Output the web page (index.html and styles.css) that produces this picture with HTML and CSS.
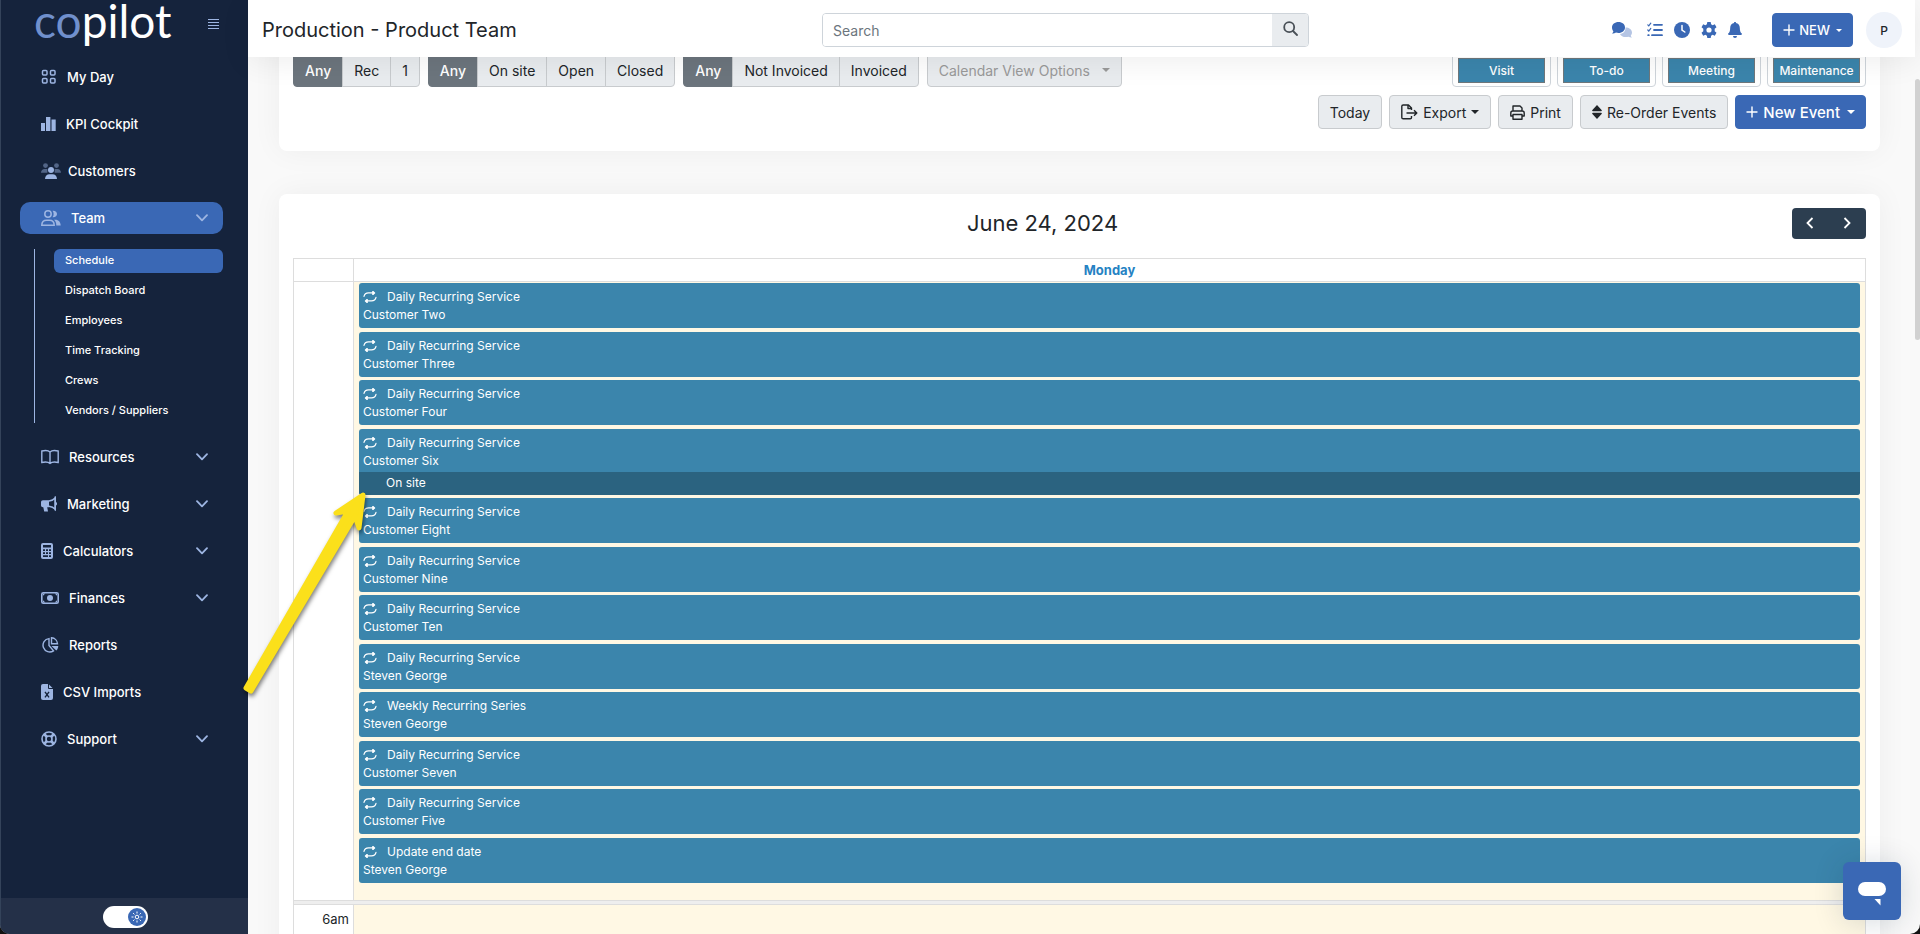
FILE: index.html
```html
<!DOCTYPE html>
<html lang="en">

<head>
	<meta charset="utf-8">
	<title>Production - Product Team</title>
	<link rel="stylesheet" href="styles.css">
</head>

<body>
	<!-- Shared icons -->
	<svg class="sprite" aria-hidden="true">
		<symbol id="chevron" viewBox="0 0 12 8"><path d="M1 1.2 6 6.4 11 1.2" fill="none" stroke="currentColor" stroke-width="1.8" stroke-linecap="round" stroke-linejoin="round"/></symbol>
		<symbol id="repeat" viewBox="0 0 14 14"><path d="M1 6.400C1.500 4 3.300 2.900 5.500 2.900H11M13 7.400c-.5 2.400-2.300 3.500-4.500 3.500H3" fill="none" stroke="currentColor" stroke-width="1.200" stroke-linecap="round"/><path d="M9.200.9h1.200l2 2-2 2H9.200zM4.800 8.900H3.600l-2 2 2 2h1.200z" fill="currentColor"/></symbol>
		<symbol id="plus" viewBox="0 0 12 12"><path d="M6 1v10M1 6h10" stroke="currentColor" stroke-width="1.4" stroke-linecap="round"/></symbol>
	</svg>

	<div class="app">
		<aside class="sidebar">
			<div class="brand">
				<a href="#" class="logo"><span>co</span>pilot</a>
				<button class="menu-btn" aria-label="Toggle menu">
					<svg width="12" height="12" viewBox="0 0 12 12"><path d="M0 1.5h11M0 4.5h11M0 7.500h11M0 10.500h11" stroke="currentColor" stroke-width="1.2"/></svg>
				</button>
			</div>

			<nav class="nav">
				<a href="#" class="nav-item">
					<svg width="16" height="16" viewBox="0 0 16 16" fill="none" stroke="currentColor" stroke-width="1.5"><rect x="1.500" y="1.500" width="4.500" height="4.500" rx="1"/><rect x="9.500" y="1.500" width="4.500" height="4.500" rx="1"/><rect x="1.500" y="9.500" width="4.500" height="4.500" rx="1"/><rect x="9.500" y="9.500" width="4.500" height="4.500" rx="1"/></svg>
					<span>My Day</span>
				</a>
				<a href="#" class="nav-item">
					<svg width="15" height="16" viewBox="0 0 15 16" fill="currentColor"><path d="M0 7h4v8H0zM5 1h4.400v14H5zM10.500 3.500h4.200V15h-4.200z"/></svg>
					<span>KPI Cockpit</span>
				</a>
				<a href="#" class="nav-item wide">
					<svg width="20" height="16" viewBox="0 0 20 16" fill="currentColor"><g opacity=".45"><circle cx="4.500" cy="2.600" r="2.400"/><circle cx="15.500" cy="2.600" r="2.400"/><path d="M0 9.800C0 7.600 1.600 6 3.600 6h2.800v3.800zM20 9.800C20 7.600 18.400 6 16.400 6h-2.800v3.800z"/></g><circle cx="10" cy="7" r="3"/><path d="M4 16c0-3 2-4.800 4.400-4.800h3.200C14 11.200 16 13 16 16z"/></svg>
					<span>Customers</span>
				</a>
				<a href="#" class="nav-item wide active">
					<svg width="20" height="16" viewBox="0 0 20 16" fill="none" stroke="currentColor" stroke-width="1.500"><circle cx="7" cy="4" r="3.200"/><path d="M.8 15.200c0-3.200 2.200-5 4.800-5h2.800c2.600 0 4.800 1.800 4.800 5z"/><path d="M11.500.8c2.700-.4 4.500 1.200 4.500 3.200s-1.800 3.600-4.500 3.200c1.500-1.800 1.500-4.600 0-6.400zM13 9.800h1.500c3 0 5.200 2.400 5.200 5.600h-4.400c0-2.600-.8-4.300-2.300-5.600z" fill="currentColor" stroke="none"/></svg>
					<span>Team</span>
					<svg class="chev"><use href="#chevron"/></svg>
				</a>
				<div class="subnav">
					<a href="#" class="current">Schedule</a>
					<a href="#">Dispatch Board</a>
					<a href="#">Employees</a>
					<a href="#">Time Tracking</a>
					<a href="#">Crews</a>
					<a href="#">Vendors / Suppliers</a>
				</div>
				<a href="#" class="nav-item">
					<svg width="18" height="16" viewBox="0 0 18 16" fill="none" stroke="currentColor" stroke-width="1.400"><path d="M9 3C7.500 1.500 4 1.300.8 2v11.500c3.200-.7 6.700-.4 8.200.9 1.500-1.300 5-1.600 8.200-.9V2C14 1.300 10.500 1.500 9 3zv11"/></svg>
					<span>Resources</span>
					<svg class="chev"><use href="#chevron"/></svg>
				</a>
				<a href="#" class="nav-item">
					<svg width="16" height="16" viewBox="0 0 16 16" fill="currentColor"><path d="M0 6.200C0 5 .8 4.200 2 4.200h6v7H6.200l.8 4.200H3.200l-.9-4.200H2c-1.200 0-2-.8-2-2z"/><path d="M8 5c2.500-.3 4.800-1.400 6.200-3v11.200C12.800 11.600 10.500 10.500 8 10.200" fill="none" stroke="currentColor" stroke-width="1.500"/><path d="M13.500.5h1.500v14h-1.500z"/><path d="M15 6c1.400.4 1.400 3 0 3.400z"/></svg>
					<span>Marketing</span>
					<svg class="chev"><use href="#chevron"/></svg>
				</a>
				<a href="#" class="nav-item">
					<svg width="12" height="16" viewBox="0 0 12 16"><rect width="12" height="16" rx="2" fill="currentColor"/><path d="M2 2h8v2.500H2zM2 6.200h2v1.800H2zm3 0h2v1.800H5zm3 0h2v1.800H8zM2 9.200h2V11H2zm3 0h2V11H5zm3 0h2V11H8zM2 12.200h5V14H2zm6 0h2V14H8z" fill="#15233c"/></svg>
					<span>Calculators</span>
					<svg class="chev"><use href="#chevron"/></svg>
				</a>
				<a href="#" class="nav-item">
					<svg width="18" height="16" viewBox="0 0 18 16"><rect x=".8" y="2.800" width="16.400" height="10.400" rx="1.500" fill="none" stroke="currentColor" stroke-width="1.600"/><circle cx="9" cy="8" r="3" fill="currentColor"/><path d="M2 5.800 4.300 3.500H2zM16 5.800l-2.300-2.300H16zM2 10.200l2.300 2.300H2zM16 10.200l-2.300 2.300H16z" fill="currentColor"/></svg>
					<span>Finances</span>
					<svg class="chev"><use href="#chevron"/></svg>
				</a>
				<a href="#" class="nav-item">
					<svg width="18" height="16" viewBox="0 0 18 16" fill="none" stroke="currentColor" stroke-width="1.400"><path d="M8 1.600A6.700 6.700 0 1 0 12.500 13.800L8 8.500z"/><path d="M10.500.8v6h6C16.300 3.500 13.800 1 10.500.8z"/><path d="M10.500 9h6.800c-.1 1.900-.8 3.400-2 4.600z" fill="currentColor" stroke="none"/></svg>
					<span>Reports</span>
				</a>
				<a href="#" class="nav-item">
					<svg width="12" height="16" viewBox="0 0 12 16"><path d="M2 0h5.500L12 4.500V14a2 2 0 0 1-2 2H2a2 2 0 0 1-2-2V2a2 2 0 0 1 2-2z" fill="currentColor"/><path d="M7.500 0v4.500H12" fill="none" stroke="#15233c"/><path d="m4 7.800 4 5.500M8 7.800l-4 5.500" stroke="#15233c" stroke-width="1.400"/></svg>
					<span>CSV Imports</span>
				</a>
				<a href="#" class="nav-item">
					<svg width="16" height="16" viewBox="0 0 16 16" fill="none" stroke="currentColor" stroke-width="1.600"><circle cx="8" cy="8" r="7"/><circle cx="8" cy="8" r="3"/><path d="m3 3 3 3M13 3l-3 3M3 13l3-3M13 13l-3-3" stroke-width="2.600"/></svg>
					<span>Support</span>
					<svg class="chev"><use href="#chevron"/></svg>
				</a>
			</nav>

			<div class="side-foot">
				<label class="switch">
					<input type="checkbox" checked aria-label="Light mode">
					<span class="knob"><svg width="12" height="12" viewBox="0 0 12 12" fill="none" stroke="#fff"><circle cx="6" cy="6" r="1.800"/><path d="M6 .5v2M6 9.500v2M.5 6h2M9.500 6h2M2.100 2.100l1.300 1.300M8.600 8.600l1.300 1.300M9.900 2.100 8.600 3.400M3.400 8.600 2.100 9.900"/></svg></span>
				</label>
			</div>
		</aside>

		<div class="main">
			<header class="topbar">
				<h1>Production - Product Team</h1>
				<form class="search">
					<input type="text" placeholder="Search" aria-label="Search">
					<button type="button" aria-label="Search">
						<svg width="15" height="15" viewBox="0 0 15 15" fill="none" stroke="currentColor" stroke-width="1.800" stroke-linecap="round"><circle cx="6.200" cy="6.200" r="5"/><path d="m10 10 4 4"/></svg>
					</button>
				</form>
				<div class="top-right">
					<div class="top-icons">
						<button class="ico-chat" aria-label="Messages"><svg width="20" height="16" viewBox="0 0 20 16"><path d="M13.500 5.500c3.500 0 6.500 2 6.500 5 0 1.200-.5 2.200-1.200 3 .1.900.6 1.500 1.200 2-1.500.1-2.700-.3-3.500-.8-3.500 1.100-7.500 0-8.500-2.700 3.500-.5 5.700-3 5.500-6.500z" fill="#b5c5e4"/><path d="M6.500 0C10.200 0 13 2.300 13 5.400s-2.800 5.500-6.500 5.500c-.9 0-1.800-.2-2.600-.5-.9.700-2.200 1.200-3.900 1.200.7-.6 1.200-1.400 1.400-2.400C.5 8.200 0 6.900 0 5.400 0 2.300 2.800 0 6.500 0z" fill="#3a68b5"/></svg></button>
						<button aria-label="Tasks"><svg width="16" height="16" viewBox="0 0 16 16" fill="none" stroke="currentColor" stroke-width="1.800" stroke-linecap="round"><path d="M7 2.800h8M7 8h8M5 13.200h10M1.200 13.200h.6"/><path d="m.8 2.800 1 1 2-2.600M.8 8l1 1 2-2.600" stroke-width="1.200"/></svg></button>
						<button aria-label="Time clock"><svg width="16" height="16" viewBox="0 0 16 16"><circle cx="8" cy="8" r="8" fill="currentColor"/><path d="M8 3.500V8l2.800 2" fill="none" stroke="#fff" stroke-width="1.500" stroke-linecap="round"/></svg></button>
						<button aria-label="Settings"><svg width="16" height="16" viewBox="0 0 16 16"><path d="M6.300 0h3.400l.4 2.300 1.500.9 2.200-.9 1.700 3-1.800 1.500v2.400l1.800 1.500-1.700 3-2.200-.9-1.500.9L9.700 16H6.300l-.4-2.300-1.500-.9-2.200.9-1.700-3 1.800-1.500V6.800L.5 5.300l1.700-3 2.200.9 1.500-.9zM8 5.400a2.600 2.600 0 1 0 0 5.200 2.600 2.600 0 0 0 0-5.200z" fill="currentColor" fill-rule="evenodd"/></svg></button>
						<button aria-label="Notifications"><svg width="14" height="16" viewBox="0 0 14 16" fill="currentColor"><path d="M6.100 0h1.800v1.100c2.300.4 3.900 2.300 3.900 4.700 0 3.200.7 4.700 2 5.800.4.500.1 1.400-.7 1.400H.9c-.8 0-1.100-.9-.7-1.400 1.300-1.100 2-2.600 2-5.800 0-2.400 1.600-4.300 3.900-4.700zM5 14h4a2 2 0 0 1-4 0z"/></svg></button>
					</div>
					<button class="btn btn-primary btn-new"><svg class="plus"><use href="#plus"/></svg>NEW <i class="caret"></i></button>
					<button class="avatar">P</button>
				</div>
			</header>

			<div class="content">
				<section class="card filters">
					<div class="filter-row">
						<div class="btn-group">
							<button class="btn on">Any</button><button class="btn">Rec</button><button class="btn">1</button>
						</div>
						<div class="btn-group">
							<button class="btn on">Any</button><button class="btn">On site</button><button class="btn">Open</button><button class="btn">Closed</button>
						</div>
						<div class="btn-group">
							<button class="btn on">Any</button><button class="btn">Not Invoiced</button><button class="btn">Invoiced</button>
						</div>
						<button class="btn btn-view" disabled>Calendar View Options <i class="caret"></i></button>
						<div class="types">
							<button class="type"><span>Visit</span></button>
							<button class="type"><span>To-do</span></button>
							<button class="type"><span>Meeting</span></button>
							<button class="type"><span>Maintenance</span></button>
						</div>
					</div>
					<div class="action-row">
						<button class="btn">Today</button>
						<button class="btn"><svg width="17" height="16" viewBox="0 0 17 16" fill="none" stroke="currentColor" stroke-width="1.400" stroke-linejoin="round"><path d="M10.500 6V4L7.500 1H2.200C1.300 1 .8 1.500.8 2.300v11.200c0 .8.500 1.300 1.400 1.300h7c.8 0 1.300-.5 1.300-1.300V12M7 1v3.500h3.500M5.500 9h10M13 6.200 15.800 9 13 11.800"/></svg>Export<i class="caret"></i></button>
						<button class="btn"><svg width="15" height="15" viewBox="0 0 15 15" fill="none" stroke="currentColor" stroke-width="1.400" stroke-linejoin="round"><path d="M3 6V1h7l2 2v3M3 11H.8V8c0-1.200.8-2 2-2h9.400c1.200 0 2 .8 2 2v3H12M3 9.500h9v4.800H3z"/></svg>Print</button>
						<button class="btn"><svg width="10" height="14" viewBox="0 0 10 14" fill="currentColor"><path d="M5 0l4.600 5c.5.600.2 1.200-.5 1.200H.9C.2 6.200-.1 5.600.4 5zM5 14l4.600-5c.5-.6.2-1.200-.5-1.200H.9c-.7 0-1 .6-.5 1.200z"/></svg>Re-Order Events</button>
						<button class="btn btn-primary btn-event"><svg class="plus"><use href="#plus"/></svg>New Event <i class="caret"></i></button>
					</div>
				</section>

				<section class="card calendar">
					<div class="cal-head">
						<span></span>
						<h2>June 24, 2024</h2>
						<div class="pager">
							<button aria-label="Previous day"><svg width="8" height="12" viewBox="0 0 8 12"><path d="M6.500 1 1.500 6l5 5"/></svg></button>
							<button aria-label="Next day"><svg width="8" height="12" viewBox="0 0 8 12"><path d="m1.500 1 5 5-5 5"/></svg></button>
						</div>
					</div>

					<table class="cal-grid">
						<thead>
							<tr>
								<th class="axis"></th>
								<th><a href="#">Monday</a></th>
							</tr>
						</thead>
						<tbody>
							<tr class="all-day">
								<td class="axis"></td>
								<td class="day">
									<div class="event"><p><svg><use href="#repeat"/></svg>Daily Recurring Service</p><p>Customer Two</p></div>
									<div class="event"><p><svg><use href="#repeat"/></svg>Daily Recurring Service</p><p>Customer Three</p></div>
									<div class="event"><p><svg><use href="#repeat"/></svg>Daily Recurring Service</p><p>Customer Four</p></div>
									<div class="event"><p><svg><use href="#repeat"/></svg>Daily Recurring Service</p><p>Customer Six</p><div class="status">On site</div></div>
									<div class="event"><p><svg><use href="#repeat"/></svg>Daily Recurring Service</p><p>Customer Eight</p></div>
									<div class="event"><p><svg><use href="#repeat"/></svg>Daily Recurring Service</p><p>Customer Nine</p></div>
									<div class="event"><p><svg><use href="#repeat"/></svg>Daily Recurring Service</p><p>Customer Ten</p></div>
									<div class="event"><p><svg><use href="#repeat"/></svg>Daily Recurring Service</p><p>Steven George</p></div>
									<div class="event"><p><svg><use href="#repeat"/></svg>Weekly Recurring Series</p><p>Steven George</p></div>
									<div class="event"><p><svg><use href="#repeat"/></svg>Daily Recurring Service</p><p>Customer Seven</p></div>
									<div class="event"><p><svg><use href="#repeat"/></svg>Daily Recurring Service</p><p>Customer Five</p></div>
									<div class="event"><p><svg><use href="#repeat"/></svg>Update end date</p><p>Steven George</p></div>
								</td>
							</tr>
							<tr class="divider"><td colspan="2"></td></tr>
							<tr class="slot">
								<td class="axis">6am</td>
								<td class="day"></td>
							</tr>
						</tbody>
					</table>
				</section>
			</div>
		</div>

		<div class="scroll"><div class="thumb"></div></div>

		<button class="chat" aria-label="Open chat">
			<svg width="30" height="26" viewBox="0 0 30 26" fill="#fff"><rect x="1" y="1" width="28" height="14" rx="7"/><path d="M17.500 18H23.500v6.500z"/></svg>
		</button>

		<!-- Pointer to the On site bar -->
		<svg class="arrow" width="150" height="220" viewBox="0 0 150 220">
			<path d="M126 13 99 31 111 29 9 206 14 209 118 34 122 46z" fill="#fbe01b" stroke="#fbe01b" stroke-width="5" stroke-linejoin="round"/>
		</svg>
	</div>
</body>

</html>
```

FILE: styles.css
```css
* {
	box-sizing: border-box;
}

html {
	background: #111;
}

body {
	margin: 0;
	font-family: Inter, "Liberation Sans", sans-serif;
	font-size: 14px;
	color: #212529;
}

button,
input {
	font: inherit;
	color: inherit;
}

button {
	padding: 0;
	border: 0;
	background: none;
}

a {
	color: inherit;
	text-decoration: none;
}

h1,
h2,
p {
	margin: 0;
	font-weight: 400;
}

.sprite {
	position: absolute;
	width: 0;
	height: 0;
}

.app {
	position: relative;
	display: flex;
	height: 100vh;
	overflow: hidden;
	background: #f9f9f9;
	border-radius: 0 0 10px 10px;
}

/* sidebar */
.sidebar {
	display: flex;
	flex-direction: column;
	width: 248px;
	flex: none;
	background: #15233c;
	border-left: 1px solid #34435a;
	color: #fff;
}

.brand {
	display: flex;
	align-items: flex-start;
	justify-content: space-between;
	height: 48px;
	padding: 0 28px 0 33px;
}

.logo {
	font-family: Lato, sans-serif;
	font-size: 46px;
	line-height: 42px;
}

.logo span {
	color: #7090cd;
}

.menu-btn {
	margin-top: 18px;
	color: #9db5e2;
}

.menu-btn svg {
	display: block;
}

.nav {
	flex: 1;
	padding: 13px 25px 0 19px;
}

.nav-item {
	display: flex;
	align-items: center;
	gap: 10px;
	height: 32px;
	margin-bottom: 15px;
	padding: 0 15px 0 21px;
	border-radius: 10px;
	font-size: 13px;
	font-weight: 500;
}

.nav-item svg {
	flex: none;
	color: #9db5e2;
}

.nav-item .chev {
	width: 12px;
	height: 8px;
	margin-left: auto;
}

.nav-item.wide {
	gap: 7px;
}

.nav-item.active {
	gap: 10px;
	background: #3a68b5;
}

.subnav {
	margin: 0 0 18px 14px;
	padding-left: 19px;
	border-left: 1px solid #9db5e2;
}

.subnav a {
	display: block;
	height: 24px;
	margin-bottom: 6px;
	padding-left: 11px;
	border-radius: 6px;
	font-size: 11px;
	font-weight: 500;
	line-height: 22px;
}

.subnav a:last-child {
	margin-bottom: 0;
}

.subnav .current {
	background: #3a68b5;
}

.side-foot {
	display: flex;
	align-items: center;
	justify-content: center;
	height: 36px;
	padding: 1px 0 0 2px;
	background: #243048;
}

.switch {
	display: flex;
	align-items: center;
	justify-content: flex-end;
	width: 45px;
	height: 22px;
	padding: 2px;
	border-radius: 11px;
	background: #fff;
}

.switch input {
	position: absolute;
	opacity: 0;
}

.knob {
	display: flex;
	align-items: center;
	justify-content: center;
	width: 18px;
	height: 18px;
	border-radius: 50%;
	background: #3a68b5;
}

/* top bar */
.main {
	display: flex;
	flex-direction: column;
	flex: 1;
	min-width: 0;
}

.topbar {
	position: relative;
	z-index: 1;
	display: grid;
	grid-template-columns: 17fr 487px 18fr;
	align-items: center;
	flex: none;
	height: 57px;
	padding: 3px 13px 0 14px;
	background: #fff;
	box-shadow: 0 5px 30px rgba(0, 0, 0, 0.07);
}

.topbar h1 {
	font-size: 20px;
	line-height: 24px;
}

.search {
	display: flex;
	height: 34px;
	border: 1px solid #ced4da;
	border-radius: 4px;
	overflow: hidden;
}

.search input {
	flex: 1;
	min-width: 0;
	padding: 0 10px;
	border: 0;
	background: #fff;
}

.search input::placeholder {
	color: #6c757d;
	opacity: 1;
}

.search button {
	width: 36px;
	background: #e9ecef;
	color: #495057;
}

.top-right {
	display: flex;
	align-items: center;
	justify-content: flex-end;
}

.top-icons {
	display: flex;
	align-items: center;
	gap: 11px;
	margin-right: 30px;
	color: #3a68b5;
}

.top-icons svg {
	display: block;
}

.ico-chat {
	margin-right: 4px;
}

.avatar {
	width: 36px;
	height: 36px;
	margin-left: 13px;
	border-radius: 50%;
	background: #eff3fa;
	font-size: 12px;
	font-weight: 500;
}

/* buttons */
.btn {
	display: inline-flex;
	align-items: center;
	gap: 5px;
	height: 34px;
	padding: 0 11px;
	border: 1px solid #c8cbce;
	border-radius: 4px;
	background: #e9ecef;
	white-space: nowrap;
}

.btn-primary {
	padding: 0 10px;
	border-color: #3a68b5;
	background: #3a68b5;
	color: #fff;
	font-weight: 500;
}

.btn-new {
	gap: 4px;
	font-size: 13px;
}

.btn-event {
	font-size: 15px;
}

.plus {
	width: 12px;
	height: 12px;
}

.caret {
	border: 4px solid transparent;
	border-top-color: currentColor;
	border-bottom: 0;
}

.btn-primary .caret {
	margin-left: 2px;
}

.btn-new .caret {
	border-width: 3px 3px 0;
}

.btn-group {
	display: flex;
}

.btn-group .btn {
	margin-left: -1px;
	border-radius: 0;
}

.btn-group .btn:first-child {
	margin-left: 0;
	border-radius: 4px 0 0 4px;
}

.btn-group .btn:last-child {
	border-radius: 0 4px 4px 0;
}

.btn-group .on {
	border-color: #6c757d;
	background: #6c757d;
	color: #fff;
	font-weight: 500;
}

.btn-view {
	gap: 12px;
	color: #999;
}

/* content */
.content {
	flex: 1;
	min-height: 0;
	padding: 0 35px 0 31px;
	overflow: hidden;
}

.card {
	padding: 14px;
	border-radius: 8px;
	background: #fff;
	box-shadow: 0 0 30px rgba(0, 0, 0, 0.05);
}

/* scrolled a little under the top bar */
.filters {
	margin: -18px 0 43px;
	padding-bottom: 22px;
}

.filter-row {
	display: flex;
	gap: 8px;
}

.types {
	display: flex;
	gap: 6px;
	margin-left: auto;
}

.type {
	width: 99px;
	height: 34px;
	padding: 4px 5px;
	border: 1px solid #ced4da;
	border-radius: 4px;
	background: #fff;
}

.type span {
	display: block;
	border: 1px solid #6f777b;
	background: #3b85ac;
	color: #fff;
	font-size: 12px;
	font-weight: 500;
	line-height: 23px;
}

.action-row {
	display: flex;
	justify-content: flex-end;
	gap: 7px;
	margin-top: 8px;
}

.calendar {
	height: 1000px;
}

.cal-head {
	display: flex;
	align-items: center;
	justify-content: space-between;
	margin-bottom: 19px;
}

.cal-head h2 {
	font-size: 22px;
	line-height: 31px;
}

.pager {
	display: flex;
	border-radius: 4px;
	background: #2c3e50;
}

.pager button {
	width: 37px;
	height: 31px;
}

.pager path {
	fill: none;
	stroke: #fff;
	stroke-width: 1.8;
}

.cal-grid {
	width: 100%;
	border-collapse: collapse;
	table-layout: fixed;
}

.cal-grid th,
.cal-grid td {
	padding: 0;
	border: 1px solid #ddd;
}

.cal-grid th {
	height: 23px;
	font-size: 13px;
	line-height: 22px;
	color: #2582c3;
}

.cal-grid .axis {
	width: 60px;
}

.cal-grid .day {
	padding: 1px 5px 17px;
	background: #fff8e4;
}

.cal-grid .divider td {
	height: 4px;
	background: #eee;
}

.cal-grid .slot .axis {
	height: 60px;
	padding: 5px 4px 0 0;
	font-size: 13px;
	line-height: 18px;
	text-align: right;
	vertical-align: top;
}

.event {
	height: 45px;
	margin-bottom: 4px;
	padding-top: 5px;
	border-radius: 3px;
	background: #3b85ac;
	color: #fff;
	font-size: 12px;
	line-height: 18px;
	overflow: hidden;
}

.event:nth-child(even) {
	margin-bottom: 3px;
}

.event:last-child {
	margin-bottom: 0;
}

.event:has(.status) {
	height: 66px;
}

.event p {
	display: flex;
	align-items: center;
	gap: 10px;
	padding-left: 4px;
}

.event svg {
	width: 14px;
	height: 14px;
}

.status {
	height: 23px;
	margin-top: 2px;
	padding-left: 27px;
	background: #2b6380;
	line-height: 22px;
}

/* page scrollbar */
.scroll {
	flex: none;
	width: 5px;
}

.thumb {
	height: 261px;
	margin-top: 79px;
	border-radius: 3px;
	background: #d1d1d1;
}

.chat {
	position: absolute;
	right: 19px;
	bottom: 14px;
	z-index: 2;
	width: 58px;
	height: 58px;
	border-radius: 6px;
	background: #3a68b5;
	box-shadow: 0 2px 30px rgba(0, 40, 60, 0.16);
}

.chat svg {
	display: block;
	margin: 6px auto 0;
}

.arrow {
	position: absolute;
	left: 237px;
	top: 482px;
	z-index: 2;
	filter: drop-shadow(1px 3px 2px rgba(0, 0, 0, 0.5));
}
```
